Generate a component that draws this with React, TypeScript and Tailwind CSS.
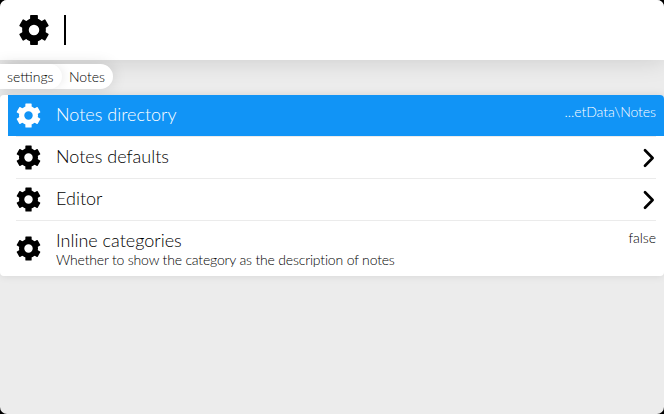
const TEETH = [
  'rotate(0 12 12)',
  'rotate(60 12 12)',
  'rotate(120 12 12)',
  'rotate(180 12 12)',
  'rotate(240 12 12)',
  'rotate(300 12 12)',
];

function Gear({ className }: { className: string }) {
  return (
    <svg viewBox="0 0 24 24" fill="currentColor" className={className}>
      <circle cx="12" cy="12" r="5.7" fill="none" stroke="currentColor" strokeWidth="4.4" />
      {TEETH.map((turn) => (
        <rect key={turn} x="9.4" y="2" width="5.2" height="5" rx="0.5" transform={turn} />
      ))}
    </svg>
  );
}

function Chevron() {
  return (
    <svg viewBox="0 0 14 20" fill="none" stroke="currentColor" strokeWidth="2.7" strokeLinecap="round" strokeLinejoin="round" className="mt-[11px] h-5 w-3.5">
      <path d="M3 2.3 10.6 10 3 17.7" />
    </svg>
  );
}

type Item = { name: string; value?: string; description?: string; selected?: boolean };

const items: Item[] = [
  { name: 'Notes directory', value: '...etData\\Notes', selected: true },
  { name: 'Notes defaults' },
  { name: 'Editor' },
  { name: 'Inline categories', value: 'false', description: 'Whether to show the category as the description of notes' },
];

function Row({ item, last }: { item: Item; last: boolean }) {
  return (
    <div className={last ? 'h-[55px] pl-2' : 'h-[42px] pl-2'}>
      <div className={`flex px-2 ${last ? 'h-[55px]' : 'h-[41px]'} ${item.selected ? 'bg-[#1194f6] text-white' : ''}`}>
        <Gear className={`-ml-0.5 size-[29px] shrink-0 ${last ? 'mt-[13px]' : 'mt-1.5'}`} />
        <div className="ml-[13px] grow pt-[7px]">
          <div className="text-[18px] leading-6">{item.name}</div>
          {item.description && (
            <div className="-mt-px text-[14px] leading-[18px] tracking-[-0.18px]">{item.description}</div>
          )}
        </div>
        {item.value ? (
          <div className="pt-2 text-[14px] leading-[18px] tracking-[-0.05px]">{item.value}</div>
        ) : (
          <Chevron />
        )}
      </div>
      {!last && <div className="mx-2 h-px bg-[#ebebeb]" />}
    </div>
  );
}

export default function App() {
  return (
    <div className="h-[414px] w-[664px] bg-black">
      <div className="flex h-full flex-col overflow-hidden rounded-[7px] bg-[#ececec] font-['Lato',sans-serif] font-light text-black">
        <div className="flex h-[60px] shrink-0 items-center bg-white pl-4 shadow-[0_0_25px_rgba(0,0,0,0.15)]">
          <Gear className="size-9" />
          <div className="ml-3 h-[30px] w-0.5 bg-black" />
        </div>
        <div className="mt-1 flex h-[25px] shrink-0 text-[14px] leading-[26px]">
          <div className="flex rounded-r-full bg-white shadow-[0_0_15px_rgba(0,0,0,0.12)]">
            <div className="w-[62px] overflow-visible rounded-r-full bg-white pl-[7px] shadow-[4px_0_10px_-2px_rgba(0,0,0,0.08)]">settings</div>
            <div className="w-[51px] pl-[7px]">Notes</div>
          </div>
        </div>
        <div className="mt-1.5 h-[181px] shrink-0 overflow-hidden rounded bg-white shadow-[0_0_8px_rgba(0,0,0,0.1)]">
          {items.map((item, i) => (
            <Row key={item.name} item={item} last={i === items.length - 1} />
          ))}
        </div>
      </div>
    </div>
  );
}
